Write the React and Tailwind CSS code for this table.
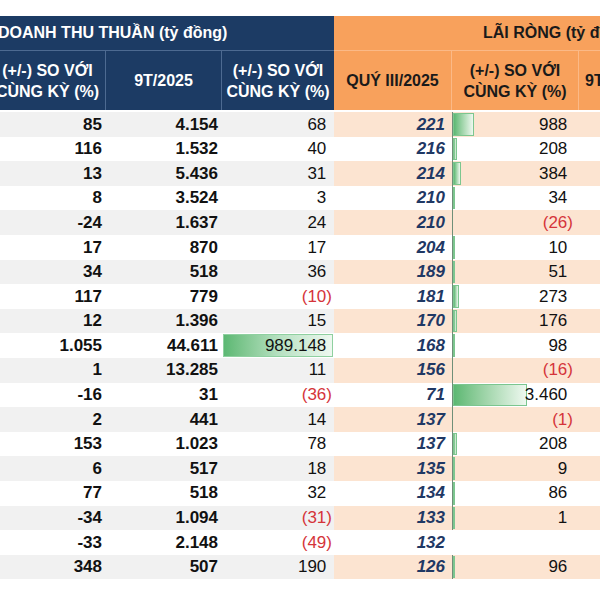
import React from "react";

const rows = [
  ["85", "4.154", 68, "221", 988],
  ["116", "1.532", 40, "216", 208],
  ["13", "5.436", 31, "214", 384],
  ["8", "3.524", 3, "210", 34],
  ["-24", "1.637", 24, "210", -26],
  ["17", "870", 17, "204", 10],
  ["34", "518", 36, "189", 51],
  ["117", "779", -10, "181", 273],
  ["12", "1.396", 15, "170", 176],
  ["1.055", "44.611", 989148, "168", 98],
  ["1", "13.285", 11, "156", -16],
  ["-16", "31", -36, "71", 3460],
  ["2", "441", 14, "137", -1],
  ["153", "1.023", 78, "137", 208],
  ["6", "517", 18, "135", 9],
  ["77", "518", 32, "134", 86],
  ["-34", "1.094", -31, "133", 1],
  ["-33", "2.148", -49, "132", null],
  ["348", "507", 190, "126", 96],
];

const fmt = (v) => {
  const s = Math.abs(v).toString().replace(/\B(?=(\d{3})+(?!\d))/g, ".");
  return s;
};

function Acct({ v }) {
  if (v === null) return null;
  if (v < 0) return <span className="text-[#d5343a]">({fmt(v)})</span>;
  return (
    <span>
      {fmt(v)}
      <span className="invisible">)</span>
    </span>
  );
}

const HeadTwo = ({ dark }) => (
  <div className={`leading-[21px] ${dark ? "text-white" : "text-[#1a1a1a]"}`}>
    <div>(+/-) SO VỚI</div>
    <div>CÙNG KỲ (%)</div>
  </div>
);

export default function App() {
  return (
    <div
      className="w-[600px] h-[600px] overflow-hidden bg-white pt-[16px]"
      style={{ fontFamily: '"Liberation Sans", Arial, sans-serif' }}
    >
      <div className="-ml-[10px] w-[629px]">
        <div className="grid grid-cols-[116px_116px_112px_118px_127px_40px] font-bold text-[16px]">
          {/* header row 1 */}
          <div className="col-span-3 h-[35px] bg-[#1c3b64] text-white flex items-center pl-[8px] border-b border-[#4d6a91]">
            DOANH THU THUẦN (tỷ đồng)
          </div>
          <div className="col-span-3 h-[35px] bg-[#f8a15c] text-[#1a1a1a] flex items-center pl-[149px] border-b border-[#fbb987] whitespace-nowrap">
            LÃI RÒNG (tỷ đồng)
          </div>
          {/* header row 2 */}
          <div className="h-[59px] bg-[#1c3b64] flex items-center justify-center text-center border-r border-[#4d6a91]">
            <HeadTwo dark />
          </div>
          <div className="h-[59px] bg-[#1c3b64] text-white flex items-center justify-center border-r border-[#4d6a91]">
            9T/2025
          </div>
          <div className="h-[59px] bg-[#1c3b64] flex items-center justify-center text-center">
            <HeadTwo dark />
          </div>
          <div className="h-[59px] bg-[#f8a15c] text-[#1a1a1a] flex items-center justify-center border-r border-[#fbb987]">
            QUÝ III/2025
          </div>
          <div className="h-[59px] bg-[#f8a15c] flex items-center justify-center text-center border-r border-[#fbb987]">
            <HeadTwo />
          </div>
          <div className="h-[59px] bg-[#f8a15c] text-[#1a1a1a] flex items-center pl-[6px]">
            9T/2025
          </div>
        </div>

        <div className="h-[2px]" />

        <div className="grid grid-cols-[116px_116px_112px_118px_127px_40px] auto-rows-[24.6px] text-[17px] text-[#111]">
          {rows.map((r, i) => {
            const shaded = i % 2 === 0;
            const gray = shaded ? "bg-[#f1f1f1]" : "bg-white";
            const peach = shaded ? "bg-[#fce4d1]" : "bg-white";
            const [a, b, c, d, e] = r;
            const big = c > 100000;
            const barW = e !== null && e > 0 ? Math.max(e * 0.0214, 0.5) : 0;
            return (
              <React.Fragment key={i}>
                <div className={`${gray} flex items-center justify-end pr-[4px] font-bold`}>{a}</div>
                <div className={`${gray} flex items-center justify-end pr-[4px] font-bold`}>{b}</div>
                <div className={`${gray} relative flex items-center justify-end pr-[2px]`}>
                  {big && (
                    <div className="absolute left-[1px] right-[1px] top-[1px] bottom-[1px] bg-gradient-to-r from-[#5cb873] via-[#b5e0c0] to-[#eef8f0] border border-[#8fd0a0]" />
                  )}
                  <span className="relative">
                    <Acct v={c} />
                  </span>
                </div>
                <div className={`${peach} flex items-center justify-end pr-[7px] font-bold italic text-[#1f3864]`}>{d}</div>
                <div className={`${peach} relative flex items-center justify-end pr-[6px]`}>
                  {e !== null && (
                    <div className="absolute left-0 top-0 bottom-0 w-px bg-[#6f8f78]" />
                  )}
                  {barW > 0 && (
                    <div
                      className="absolute left-[1px] top-[1px] bottom-[1px] bg-gradient-to-r from-[#5cb873] to-[#eef8f0] border border-[#7cc68f]"
                      style={{ width: `${barW}px` }}
                    />
                  )}
                  <span className="relative">
                    <Acct v={e} />
                  </span>
                </div>
                <div className={`${peach}`} />
              </React.Fragment>
            );
          })}
        </div>
      </div>
    </div>
  );
}
